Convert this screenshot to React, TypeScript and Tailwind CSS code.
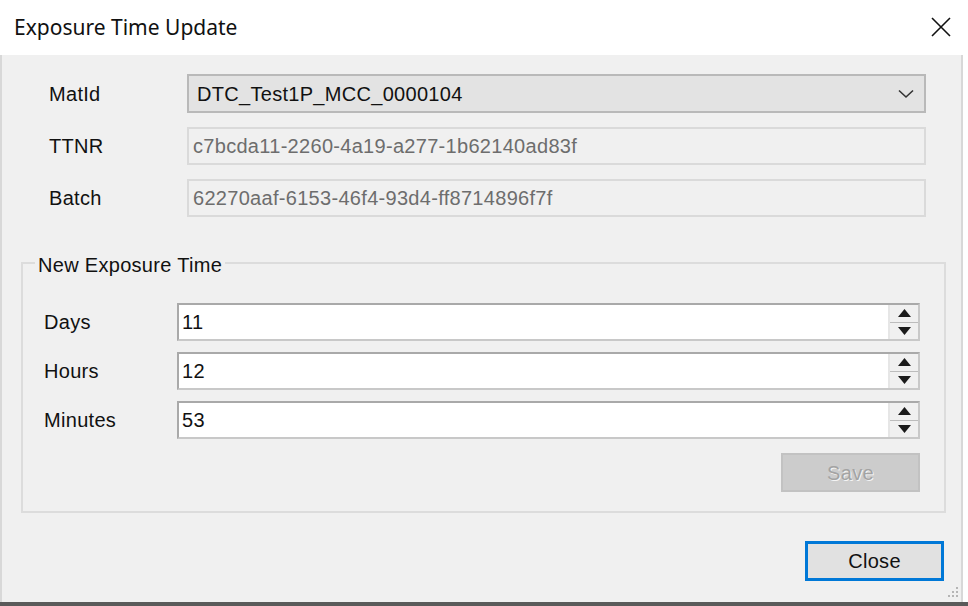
import React from 'react';

const ReadOnlyField = ({ value }: { value: string }) => (
  <div className="h-[38px] flex items-center px-[4px] border-2 border-[#dadada] bg-[#f0f0f0] text-[#6d6d6d]">
    {value}
  </div>
);

const Spinner = () => (
  <div className="flex flex-col w-[30px] h-full border-l-2 border-[#e6e6e6] bg-[#f0f0f0]">
    <div className="flex-1 flex items-center justify-center border-b border-[#bcbcbc]">
      <svg width="13" height="8" viewBox="0 0 13 8">
        <path d="M6.5 0 L13 8 L0 8 Z" fill="#1a1a1a" />
      </svg>
    </div>
    <div className="flex-1 flex items-center justify-center">
      <svg width="13" height="8" viewBox="0 0 13 8">
        <path d="M0 0 L13 0 L6.5 8 Z" fill="#1a1a1a" />
      </svg>
    </div>
  </div>
);

const NumberField = ({ label, value }: { label: string; value: string }) => (
  <div className="flex items-center">
    <span className="w-[133px] text-[#111]">{label}</span>
    <div className="flex-1 h-[38px] flex items-stretch border-2 border-t-[#a9a9a9] border-l-[#a9a9a9] border-r-[#c8c8c8] border-b-[#c8c8c8] bg-white">
      <div className="flex-1 flex items-center px-[3px] text-[#111]">{value}</div>
      <Spinner />
    </div>
  </div>
);

const App = () => {
  return (
    <div
      className="w-[968px] h-[606px] flex flex-col bg-white text-[20px] tracking-[0.3px] overflow-hidden"
      style={{ fontFamily: '"Liberation Sans", Arial, sans-serif' }}
    >
      <div className="h-[55px] flex items-center justify-between pl-[14px] pr-[16px] bg-white">
        <span className="text-[21px] tracking-normal text-[#111]" style={{ fontFamily: '"Noto Sans", "Open Sans", sans-serif' }}>
          Exposure Time Update
        </span>
        <svg width="22" height="22" viewBox="0 0 22 22" className="mb-[2px]">
          <path d="M2 2 L20 20 M20 2 L2 20" stroke="#111" strokeWidth="1.6" />
        </svg>
      </div>

      <div className="relative flex-1 flex flex-col bg-[#f0f0f0] border-l-2 border-[#d8d8d8] mr-[5px] border-r-2 pt-[19px]">
        <div className="flex flex-col gap-[14px] pl-[47px] pr-[35px]">
          <div className="flex items-center">
            <span className="w-[138px] text-[#111]">MatId</span>
            <div className="flex-1 h-[39px] flex items-center justify-between pl-[8px] pr-[10px] border-2 border-[#b9b9b9] bg-[#e3e3e3] text-[#111]">
              <span>DTC_Test1P_MCC_0000104</span>
              <svg width="16" height="10" viewBox="0 0 16 10">
                <path d="M1 1.5 L8 8 L15 1.5" fill="none" stroke="#333" strokeWidth="1.6" />
              </svg>
            </div>
          </div>
          <div className="flex items-center">
            <span className="w-[138px] text-[#111]">TTNR</span>
            <div className="flex-1">
              <ReadOnlyField value="c7bcda11-2260-4a19-a277-1b62140ad83f" />
            </div>
          </div>
          <div className="flex items-center">
            <span className="w-[138px] text-[#111]">Batch</span>
            <div className="flex-1">
              <ReadOnlyField value="62270aaf-6153-46f4-93d4-ff8714896f7f" />
            </div>
          </div>
        </div>

        <div className="relative mt-[45px] ml-[19px] mr-[15px] h-[251px] border-2 border-[#dcdcdc] pt-[39px] pl-[21px] pr-[24px]">
          <span className="absolute -top-[14px] left-[12px] px-[3px] bg-[#f0f0f0] text-[#111]">New Exposure Time</span>
          <div className="flex flex-col gap-[11px]">
            <NumberField label="Days" value="11" />
            <NumberField label="Hours" value="12" />
            <NumberField label="Minutes" value="53" />
          </div>
          <div className="flex justify-end mt-[14px]">
            <button className="w-[139px] h-[39px] border-2 border-[#c2c2c2] bg-[#cccccc] text-[#a3a3a3]" style={{ textShadow: '1px 1px 0 #f4f4f4' }}>
              Save
            </button>
          </div>
        </div>

        <div className="flex justify-end mt-[28px] pr-[17px]">
          <button className="w-[139px] h-[40px] border-[3px] border-[#0078d7] bg-[#e1e1e1] text-[#111]">
            Close
          </button>
        </div>

        <svg width="12" height="12" viewBox="0 0 12 12" className="absolute right-[2px] bottom-[4px]">
          <rect x="9" y="1" width="2" height="2" fill="#b5b5b5" />
          <rect x="5" y="5" width="2" height="2" fill="#b5b5b5" />
          <rect x="9" y="5" width="2" height="2" fill="#b5b5b5" />
          <rect x="1" y="9" width="2" height="2" fill="#b5b5b5" />
          <rect x="5" y="9" width="2" height="2" fill="#b5b5b5" />
          <rect x="9" y="9" width="2" height="2" fill="#b5b5b5" />
        </svg>
      </div>
      <div className="h-[4px] bg-[#5a5a5a]" />
    </div>
  );
};

export default App;
